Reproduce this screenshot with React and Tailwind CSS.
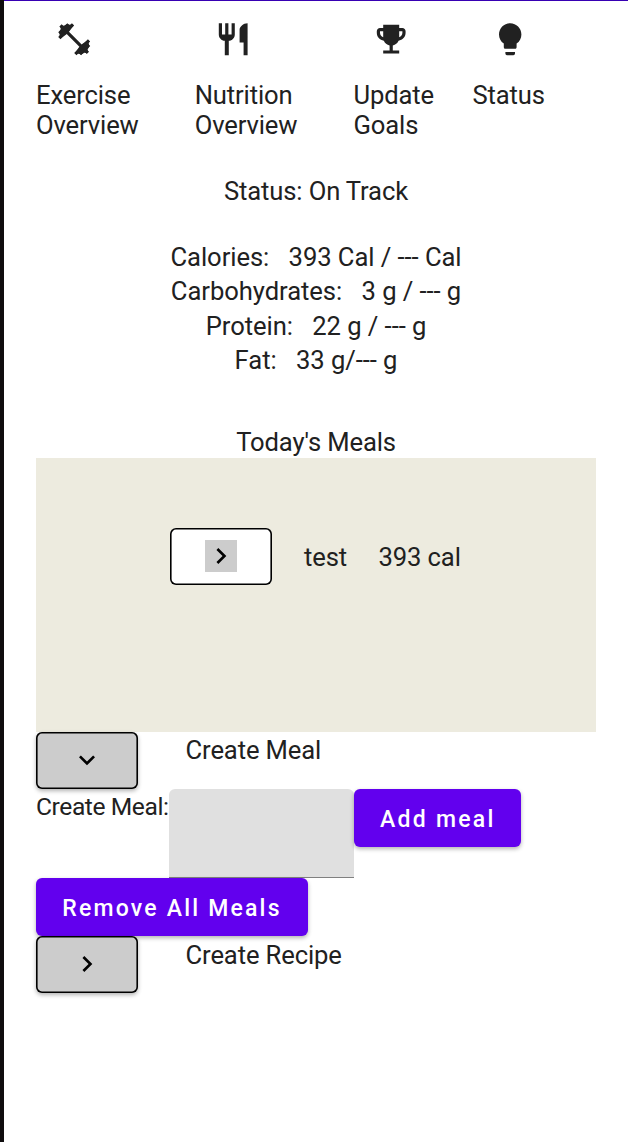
const paths = {
  dumbbell:
    "M20.57 14.86L22 13.43 20.57 12 17 15.57 8.43 7 12 3.43 10.57 2 9.14 3.43 7.71 2 5.57 4.14 4.14 2.71 2.71 4.14l1.43 1.43L2 7.71l1.43 1.43L2 10.57 3.43 12 7 8.43 15.57 17 12 20.57 13.43 22l1.43-1.43L16.29 22l2.14-2.14 1.43 1.43 1.43-1.43-1.43-1.43L22 16.29z",
  restaurant:
    "M11 9H9V2H7v7H5V2H3v7c0 2.12 1.66 3.84 3.75 3.97V22h2.5v-9.03C11.34 12.84 13 11.12 13 9V2h-2v7zm5-3v8h2.5v8H21V2c-2.76 0-5 2.24-5 4z",
  trophy:
    "M19 5h-2V3H7v2H5c-1.1 0-2 .9-2 2v1c0 2.55 1.92 4.63 4.39 4.94.63 1.5 1.98 2.63 3.61 2.96V19H7v2h10v-2h-4v-3.1c1.63-.33 2.98-1.46 3.61-2.96C19.08 12.63 21 10.55 21 8V7c0-1.1-.9-2-2-2zM5 8V7h2v3.82C5.84 10.4 5 9.3 5 8zm14 0c0 1.3-.84 2.4-2 2.82V7h2v1z",
  bulb:
    "M9 21c0 .55.45 1 1 1h4c.55 0 1-.45 1-1v-1H9v1zm3-19C8.14 2 5 5.14 5 9c0 2.38 1.19 4.47 3 5.74V17c0 .55.45 1 1 1h6c.55 0 1-.45 1-1v-2.26c1.81-1.27 3-3.36 3-5.74 0-3.86-3.14-7-7-7z",
  right: "M8.59 16.59L13.17 12 8.59 7.41 10 6l6 6-6 6-1.41-1.41z",
  down: "M7.41 8.59L12 13.17l4.59-4.58L18 10l-6 6-6-6 1.41-1.41z",
};

const plate = "10.8,2.8 9.1,2.9 7.7,2.5 5.6,3.6 4.4,3.4 3.4,4.4 3.6,5.6 2.5,7.7 2.9,9.1 2.8,10.8 3.6,11.4 7,9 9,7 11.4,3.6";

function Icon({ name, className }) {
  return (
    <svg viewBox="0 0 24 24" fill="currentColor" className={className}>
      <path d={paths[name]} />
      {name === "dumbbell" && (
        <>
          <polygon points={plate} />
          <polygon points={plate} transform="rotate(180 12 12)" />
        </>
      )}
    </svg>
  );
}

const nav = [
  { icon: "dumbbell", label: "Exercise Overview", cls: "w-[158.7px]", text: "w-[110px]" },
  { icon: "restaurant", label: "Nutrition Overview", cls: "w-[158.8px]", text: "w-[110px]" },
  { icon: "trophy", label: "Update Goals", cls: "w-[119px]", text: "w-[90px]" },
  { icon: "bulb", label: "Status", cls: "w-[100px]", text: "w-[90px]" },
];

const totals = [
  ["Calories:", "393 Cal / --- Cal"],
  ["Carbohydrates:", "3 g / --- g"],
  ["Protein:", "22 g / --- g"],
  ["Fat:", "33 g/--- g"],
];

function PurpleButton({ className, children }) {
  return (
    <button className={`h-[57.6px] shrink-0 rounded-[6px] bg-[#6200ee] pt-[3px] text-[23px] leading-[30px] font-medium whitespace-nowrap text-white shadow-[0_2px_4px_rgba(0,0,0,0.3)] ${className}`}>
      {children}
    </button>
  );
}

function ToggleButton({ icon, className, iconClass = "" }) {
  return (
    <button className={`flex h-[57px] w-[101.6px] shrink-0 items-center justify-center rounded-[6px] text-black ${className}`}>
      <Icon name={icon} className={`size-8 ${iconClass}`} />
    </button>
  );
}

export default function App() {
  return (
    <div className="flex h-[1142px] w-[628px] overflow-hidden bg-white font-[Roboto,sans-serif] text-[25.6px] leading-[30px] tracking-[-0.13px] text-[#212121]">
      <div className="w-1 shrink-0 bg-[#0f0d0e]" />
      <div className="flex min-w-0 flex-1 flex-col border-t border-[#3700b3] px-8">
        <nav className="flex h-[156px] shrink-0 pt-[19px]">
          {nav.map(({ icon, label, cls, text }) => (
            <div key={label} className={`shrink-0 ${cls}`}>
              <Icon name={icon} className="ml-[19px] size-[38.4px]" />
              <div className={`mt-[22px] ${text}`}>{label}</div>
            </div>
          ))}
        </nav>
        <div className="mt-[19.4px] text-center">Status: On Track</div>
        <div className="mt-[34px] flex flex-col items-center tracking-[-0.06px]">
          {totals.map(([name, value]) => (
            <div key={name} className="flex h-[34.1px] gap-[19.4px] pt-[2px] whitespace-nowrap">
              <span>{name}</span>
              <span>{value}</span>
            </div>
          ))}
        </div>
        <div className="mt-[50.2px] text-center">Today's Meals</div>
        <section className="mt-px flex h-[274px] w-[560px] shrink-0 items-start bg-[#edebdf] pt-[69.6px] pl-[134.4px]">
          <ToggleButton icon="right" className="bg-white shadow-[inset_0_0_0_1.6px_#000]" iconClass="bg-[#ccc]" />
          <span className="mt-[14.4px] ml-8">test</span>
          <span className="mt-[14.4px] ml-[31.6px]">393 cal</span>
        </section>
        <div className="flex h-[57.4px] shrink-0">
          <ToggleButton icon="down" className="bg-[#ccc] shadow-[inset_0_0_0_1.6px_#000,0_2px_4px_rgba(0,0,0,0.3)]" />
          <span className="mt-[3.5px] ml-12">Create Meal</span>
        </div>
        <div className="flex h-[89px] shrink-0 items-start">
          <span className="w-[133px] shrink-0 pt-[3px] text-[24.6px] tracking-[-0.42px] whitespace-nowrap">Create Meal:</span>
          <input className="h-[89px] w-[184.6px] shrink-0 rounded-t-[6px] border-b-[1.6px] border-[#808080] bg-[#e0e0e0] px-4 outline-none" />
          <PurpleButton className="w-[167.4px] pl-px tracking-[2.25px]">Add meal</PurpleButton>
        </div>
        <PurpleButton className="w-[272px] tracking-[2.2px]">Remove All Meals</PurpleButton>
        <div className="flex shrink-0">
          <ToggleButton icon="right" className="bg-[#ccc] shadow-[inset_0_0_0_1.6px_#000,0_2px_4px_rgba(0,0,0,0.3)]" />
          <span className="mt-1 ml-12">Create Recipe</span>
        </div>
      </div>
    </div>
  );
}
